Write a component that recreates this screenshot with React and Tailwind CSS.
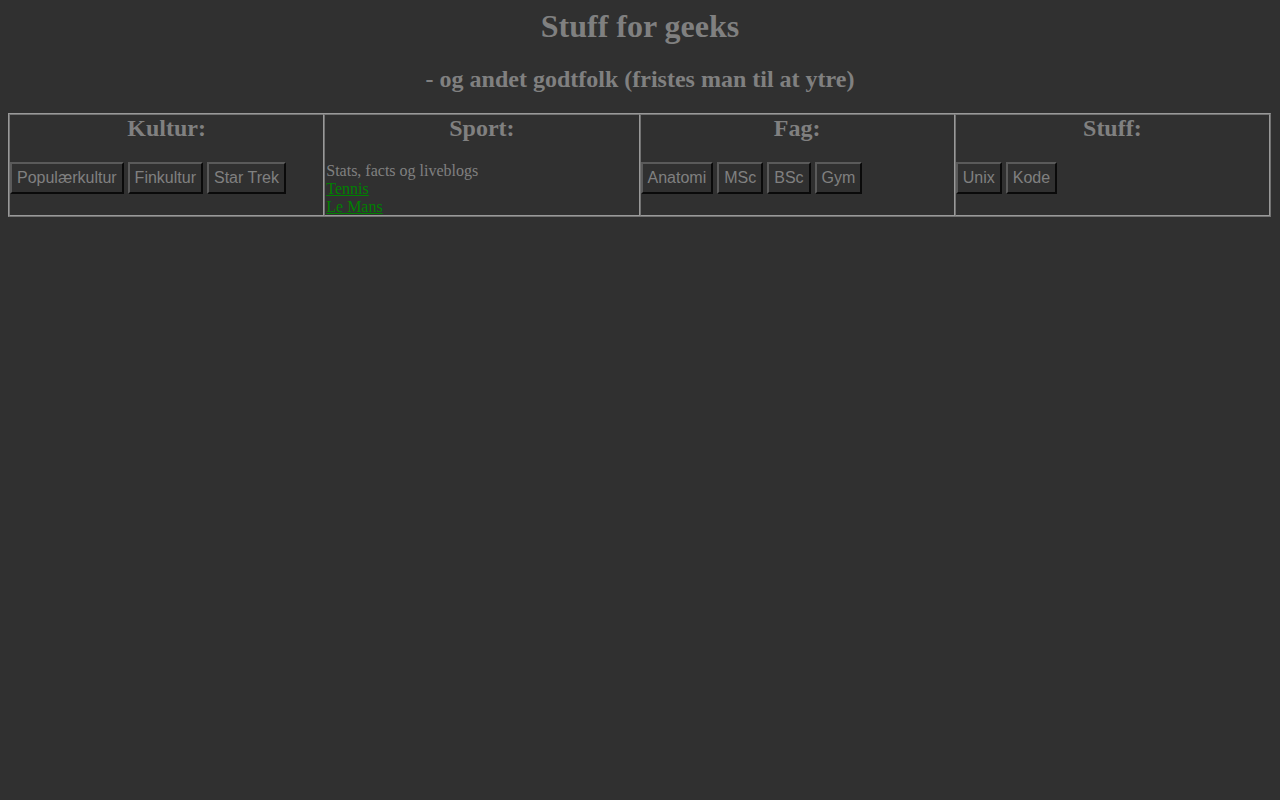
import React from "react";

function Btn({ children }) {
  return (
    <button
      className="font-['Liberation_Sans',Arial,sans-serif] text-[16px] leading-[18px] text-[#808080] bg-[#303030] px-[5px] py-[5px] border-2 border-t-[#5a5a5a] border-l-[#5a5a5a] border-b-[#0a0a0a] border-r-[#0a0a0a]"
    >
      {children}
    </button>
  );
}

function Cell({ title, children }) {
  return (
    <td className="align-top p-0 border border-t-[#727272] border-l-[#727272] border-b-[#999999] border-r-[#999999]">
      <h2 className="text-center text-[24px] leading-[27px] font-bold mb-[20px]">{title}</h2>
      {children}
    </td>
  );
}

export default function App() {
  return (
    <div className="min-h-[800px] bg-[#303030] text-[#808080] font-['Liberation_Serif','Times_New_Roman',serif] p-2">
      <h1 className="text-center text-[32px] leading-[37px] font-bold mb-[20px]">Stuff for geeks</h1>
      <h2 className="text-center text-[24px] leading-[28px] font-bold mb-[20px]">
        - og andet godtfolk (fristes man til at ytre)
      </h2>
      <table className="w-[1263px] table-fixed border-separate border-spacing-0 border border-t-[#999999] border-l-[#999999] border-b-[#727272] border-r-[#727272]">
        <tbody>
          <tr>
            <Cell title="Kultur:">
              <div className="flex flex-wrap gap-1">
                <Btn>Populærkultur</Btn>
                <Btn>Finkultur</Btn>
                <Btn>Star Trek</Btn>
              </div>
            </Cell>
            <Cell title="Sport:">
              <div className="text-[16px] leading-[18px] pl-px -mb-px">
                <div>Stats, facts og liveblogs</div>
                <div>
                  <a href="#" className="text-[#008000] underline">Tennis</a>
                </div>
                <div>
                  <a href="#" className="text-[#008000] underline">Le Mans</a>
                </div>
              </div>
            </Cell>
            <Cell title="Fag:">
              <div className="flex flex-wrap gap-1">
                <Btn>Anatomi</Btn>
                <Btn>MSc</Btn>
                <Btn>BSc</Btn>
                <Btn>Gym</Btn>
              </div>
            </Cell>
            <Cell title="Stuff:">
              <div className="flex flex-wrap gap-1">
                <Btn>Unix</Btn>
                <Btn>Kode</Btn>
              </div>
            </Cell>
          </tr>
        </tbody>
      </table>
    </div>
  );
}
